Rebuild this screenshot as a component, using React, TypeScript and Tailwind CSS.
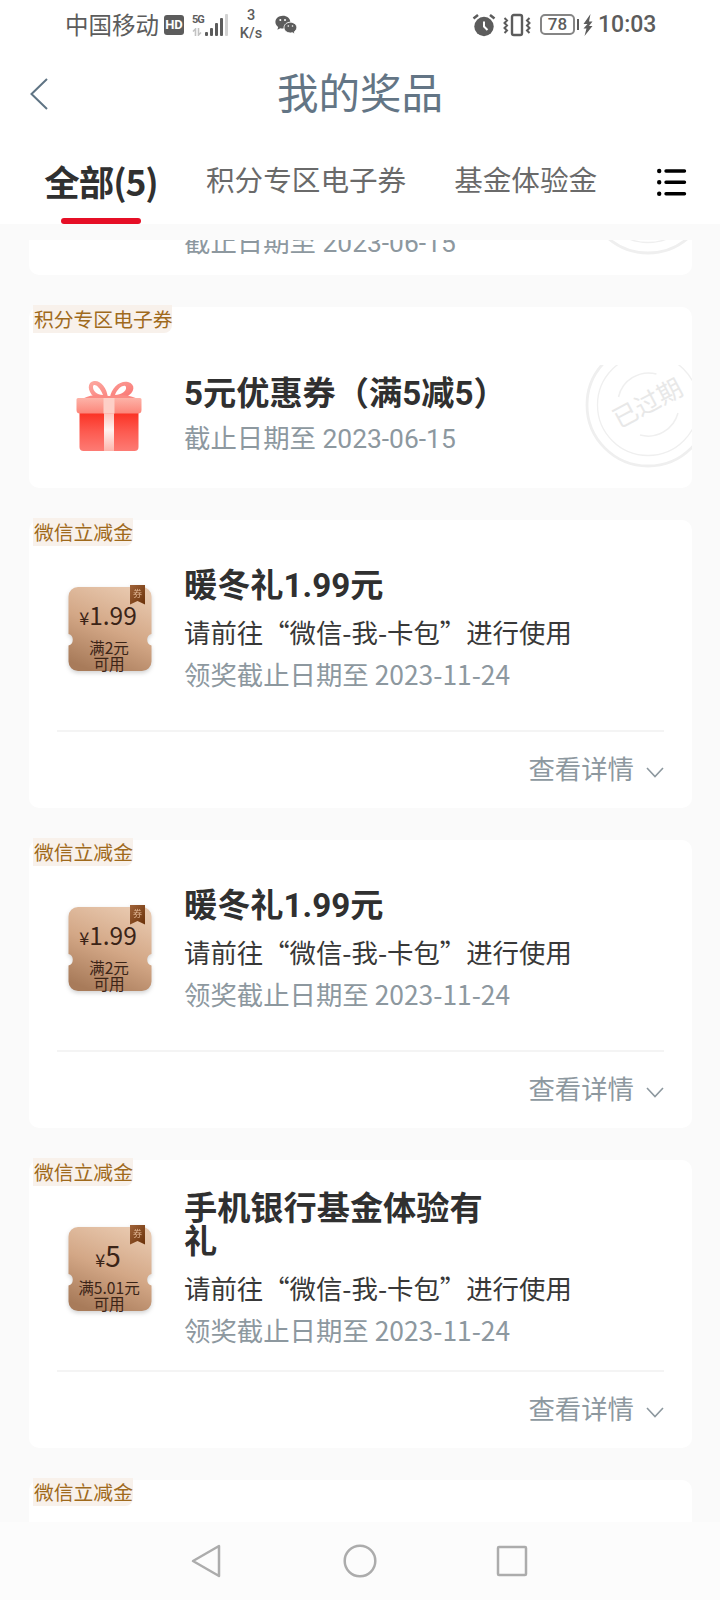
import clsx from "clsx";

type Prize = {
  id: number;
  kind: "coupon" | "wechat";
  tag: string;
  title: string;
  date: string;
  price?: string;
  limit?: string;
  scrolledOut?: boolean;
};

const prizes: Prize[] = [
  {
    id: 1,
    kind: "coupon",
    tag: "积分专区电子券",
    title: "5元优惠券（满5减5）",
    date: "截止日期至 2023-06-15",
    scrolledOut: true,
  },
  {
    id: 2,
    kind: "coupon",
    tag: "积分专区电子券",
    title: "5元优惠券（满5减5）",
    date: "截止日期至 2023-06-15",
  },
  {
    id: 3,
    kind: "wechat",
    tag: "微信立减金",
    title: "暖冬礼1.99元",
    date: "领奖截止日期至 2023-11-24",
    price: "1.99",
    limit: "满2元",
  },
  {
    id: 4,
    kind: "wechat",
    tag: "微信立减金",
    title: "暖冬礼1.99元",
    date: "领奖截止日期至 2023-11-24",
    price: "1.99",
    limit: "满2元",
  },
  {
    id: 5,
    kind: "wechat",
    tag: "微信立减金",
    title: "手机银行基金体验有礼",
    date: "领奖截止日期至 2023-11-24",
    price: "5",
    limit: "满5.01元",
  },
];

const StatusBar = () => (
  <div className="flex h-12 items-center pt-px pr-[65px] pl-[65px] text-[#5c5c5c]">
    <span className="w-[99px] text-[23.5px] leading-none whitespace-nowrap">
      中国移动
    </span>
    <span className="flex h-5 w-5 items-center justify-center rounded-[3px] bg-[#5c5c5c] font-['Roboto',sans-serif] text-[13px] font-bold text-white">
      HD
    </span>
    <div className="ml-2 flex h-6 w-9 gap-px">
      <div className="flex w-3 flex-col">
        <span className="font-['Roboto',sans-serif] text-[11px] leading-[13px] font-bold tracking-[-1px]">
          5G
        </span>
        <svg
          viewBox="0 0 10 8"
          className="mt-0.5 h-2 w-2.5"
          fill="none"
          stroke="#c2c2c2"
          strokeWidth="1.6"
        >
          <path d="M1 3.5 3.5 1v7M9 4.5 6.5 7V0" />
        </svg>
      </div>
      <svg viewBox="0 0 23 24" className="h-6 w-[23px]">
        <rect x="0" y="19" width="3" height="4" rx="1" fill="#5c5c5c" />
        <rect x="5" y="15" width="3" height="8" rx="1" fill="#5c5c5c" />
        <rect x="10" y="10" width="3" height="13" rx="1" fill="#5c5c5c" />
        <rect x="15" y="5" width="3" height="18" rx="1" fill="#5c5c5c" />
        <rect x="20" y="1" width="3" height="22" rx="1" fill="#d2d2d2" />
      </svg>
    </div>
    <div className="ml-2.5 flex w-[26px] flex-col items-center font-['Roboto',sans-serif] text-[14.5px] leading-[18px] font-medium">
      <span>3</span>
      <span>K/s</span>
    </div>
    <svg viewBox="0 0 22 20" className="ml-[11px] h-5 w-[22px]">
      <path
        d="M7.8.8C3.6.8.4 3.6.4 7.1c0 2 1.1 3.7 2.8 4.9l-.8 2.7 3-1.5c.8.2 1.6.3 2.4.3 4.2 0 7.5-2.8 7.5-6.4S12 .8 7.8.8z"
        fill="#5c5c5c"
      />
      <path
        d="M15.4 7.2c-3.6 0-6.4 2.4-6.4 5.4S11.8 18 15.4 18c.7 0 1.4-.1 2-.3l2.5 1.4-.6-2.3c1.5-1 2.5-2.5 2.5-4.2 0-3-2.9-5.4-6.4-5.4z"
        fill="#5c5c5c"
        stroke="#fff"
        strokeWidth=".9"
      />
      <g fill="#fff">
        <circle cx="5.3" cy="5" r="1" />
        <circle cx="10" cy="5" r="1" />
        <circle cx="13.3" cy="11" r=".8" />
        <circle cx="17.5" cy="11" r=".8" />
      </g>
    </svg>
    <svg viewBox="0 0 24 24" className="ml-auto h-6 w-6">
      <circle cx="12" cy="13.5" r="9.7" fill="#5c5c5c" />
      <path
        d="M1.5 5.5 6 2M22.5 5.5 18 2"
        stroke="#5c5c5c"
        strokeWidth="2.6"
      />
      <path d="M12 8.5v5l3.5 3.5" fill="none" stroke="#fff" strokeWidth="2" />
    </svg>
    <svg
      viewBox="0 0 28 24"
      className="ml-[7px] h-6 w-7"
      fill="none"
      stroke="#5c5c5c"
    >
      <rect x="9" y="2" width="10" height="20" rx="1.8" strokeWidth="2.4" />
      <path
        d="M1.500 5l2.500 2.500L1.500 10l2.500 2.500L1.500 15l2.500 2.500L1.500 20M26.500 5l-2.500 2.500L26.500 10l-2.500 2.500L26.500 15l-2.500 2.500L26.500 20"
        strokeWidth="2"
      />
    </svg>
    <span className="ml-[9px] flex h-[21px] w-[35px] items-center justify-center rounded-[5px] border-2 border-[#858585] font-['Roboto',sans-serif] text-[17px] leading-none font-medium">
      78
    </span>
    <span className="ml-[2px] h-[11px] w-[2px] bg-[#5c5c5c]" />
    <svg viewBox="0 0 10 22" className="ml-1 h-[22px] w-2.5" fill="#5c5c5c">
      <path d="M7.5 0 .5 10h4L.5 14.5h3L1.5 22 9.5 12H6l3.5-4.5H6z" />
    </svg>
    <span className="ml-[5px] w-[57px] font-['Roboto',sans-serif] text-[23px] leading-none font-medium">
      10:03
    </span>
  </div>
);

const Header = () => (
  <header className="flex h-[90px] items-center">
    <svg
      viewBox="0 0 18 32"
      className="mt-px ml-[30px] h-8 w-[18px]"
      fill="none"
      stroke="#5f7484"
      strokeWidth="2"
    >
      <path d="M17 1 1.5 16 17 31" />
    </svg>
    <h1 className="-mt-1 mr-12 flex-1 text-center text-[41.5px] leading-[60px] text-[#637585]">
      我的奖品
    </h1>
  </header>
);

const Tabs = () => (
  <nav className="flex h-[86px] items-start pt-[19px]">
    <div className="ml-[43px] flex w-[116px] flex-col items-center">
      <span className="text-[35.5px] leading-[48px] font-bold tracking-[-1.1px] whitespace-nowrap text-[#303030]">
        全部(5)
      </span>
      <span className="mt-[13px] h-[6px] w-20 rounded-full bg-[#e60f26]" />
    </div>
    <span className="ml-[47px] text-[28.6px] leading-[44px] whitespace-nowrap text-[#6a6a6a]">
      积分专区电子券
    </span>
    <span className="ml-[48px] text-[28.6px] leading-[44px] whitespace-nowrap text-[#6a6a6a]">
      基金体验金
    </span>
    <svg
      viewBox="0 0 30 28"
      className="mt-[11px] mr-[33px] ml-auto h-7 w-[30px]"
      stroke="#000"
      strokeWidth="3.4"
      strokeLinecap="round"
    >
      <path d="M9 3h18.5M9 14.3h18.5M9 25.7h18.5" />
      <path d="M2.2 3h.01M2.2 14.3h.01M2.2 25.7h.01" strokeWidth="4.4" />
    </svg>
  </nav>
);

const GiftIcon = () => (
  <svg viewBox="0 0 66 72" className="h-[72px] w-[66px]">
    <defs>
      <linearGradient id="giftBox" x1="0" y1="0" x2="0" y2="1">
        <stop offset="0" stopColor="#fb3022" />
        <stop offset=".5" stopColor="#fd5a50" />
        <stop offset="1" stopColor="#fd7b74" />
      </linearGradient>
      <linearGradient id="giftLid" x1="0" y1="0" x2="0" y2="1">
        <stop offset="0" stopColor="#fdb3a8" />
        <stop offset="1" stopColor="#fc8579" />
      </linearGradient>
      <linearGradient id="giftBow" x1="0" y1="0" x2="1" y2="1">
        <stop offset="0" stopColor="#fdaaa2" />
        <stop offset="1" stopColor="#f97471" />
      </linearGradient>
      <linearGradient id="giftRibbon" x1="0" y1="0" x2="0" y2="1">
        <stop offset="0" stopColor="#fdc0b8" />
        <stop offset=".45" stopColor="#fff3f0" />
        <stop offset="1" stopColor="#fdb5ac" />
      </linearGradient>
    </defs>
    {/* bow: two loops, then the loose ends */}
    <path
      fillRule="evenodd"
      fill="url(#giftBow)"
      d="M32 18C31 7 24 0 18 1 11 2 11 11 18 17zM27 15c-6 0-10-4-10-8 0-4 6-2 10 8zM34 18C35 7 45 0 52 2c8 2 7 11-2 15zM39 15C42 7 49 4 50 7c1 4-5 8-11 8z"
    />
    <path d="M7 18.5C15 14 25 14.500 33 16c8-1.500 19-2 28 2.500z" fill="#fb8a83" />
    <path
      d="M3.5 32h59v35a4 4 0 0 1-4 4h-51a4 4 0 0 1-4-4z"
      fill="url(#giftBox)"
    />
    <path d="M28 32h10v39H28z" fill="url(#giftRibbon)" />
    <path
      d="M2 18h62a1.500 1.500 0 0 1 1.500 1.500V30a3.500 3.500 0 0 1-3.500 3.500H4A3.500 3.500 0 0 1 .5 30V19.500A1.500 1.500 0 0 1 2 18z"
      fill="url(#giftLid)"
    />
    <path d="M27.500 18h11v15.500h-11z" fill="#fdcfc7" />
  </svg>
);

const TicketIcon = ({ price, limit }: { price?: string; limit?: string }) => (
  <div className="relative flex h-[90px] w-[84px] flex-col items-center text-[#3b2417]">
    <svg
      viewBox="0 0 84 90"
      className="absolute inset-0 h-[90px] w-[84px] overflow-visible drop-shadow-[0_2px_2px_rgba(0,0,0,0.18)]"
    >
      <defs>
        <linearGradient id="ticket" x1=".7" y1="0" x2=".3" y2="1">
          <stop offset="0" stopColor="#e8c8ae" />
          <stop offset=".5" stopColor="#d3a786" />
          <stop offset="1" stopColor="#a87b5a" />
        </linearGradient>
        <linearGradient id="flag" x1="0" y1="0" x2="1" y2="1">
          <stop offset="0" stopColor="#a0643a" />
          <stop offset="1" stopColor="#6a3008" />
        </linearGradient>
      </defs>
      <path
        d="M10 2h64a9.5 9.5 0 0 1 9.5 9.5V49a6 6 0 0 0 0 11.500v16A9.5 9.5 0 0 1 74 86H10A9.5 9.5 0 0 1 .5 76.500V60.500a6 6 0 0 0 0-11.500V11.500A9.5 9.5 0 0 1 10 2z"
        fill="url(#ticket)"
      />
      <path d="M62 0h15v19.500L69.500 16 62 19.500z" fill="url(#flag)" />
      <text x="69.5" y="12" fontSize="9" textAnchor="middle" fill="#dfb491">
        券
      </text>
    </svg>
    <div className="relative mt-[12px] mr-1 flex h-9 items-baseline leading-9">
      <span className="text-[18px]">¥</span>
      <span className={clsx(price === "5" ? "text-[28px]" : "text-[24.5px]")}>
        {price}
      </span>
    </div>
    <div className="relative mt-[6px] mr-0.5 text-center text-[15.6px] leading-4 whitespace-nowrap">
      {limit}
      <br />
      可用
    </div>
  </div>
);

const ExpiredStamp = () => (
  <svg
    viewBox="585 365 107 104"
    className="absolute top-[58px] right-0 h-[104px] w-[107px]"
    fill="none"
    stroke="#efefef"
  >
    <circle cx="648" cy="405" r="61" strokeWidth="2.8" />
    <circle cx="648" cy="405" r="50.5" strokeWidth="1.3" />
    <path
      d="M618.5 397a31 31 0 0 1 38-23M640 435a31 31 0 0 0 38-22"
      strokeWidth="1.5"
    />
    <text
      x="648"
      y="412"
      fontSize="25"
      textAnchor="middle"
      fill="#e8e8e8"
      stroke="none"
      transform="rotate(-28 648 404)"
    >
      已过期
    </text>
  </svg>
);

const Tag = ({ text, hidden }: { text: string; hidden?: boolean }) => (
  <span
    className={clsx(
      "-mt-[2px] ml-1 flex h-7 w-fit shrink-0 items-center rounded-br-lg bg-[#f8f1eb] pl-px text-[19.8px] leading-none text-[#a06a1c]",
      hidden && "invisible"
    )}
  >
    {text}
  </span>
);

const PrizeCard = ({ prize }: { prize: Prize }) => {
  const isWechat = prize.kind === "wechat";

  return (
    <li
      className={clsx(
        "relative flex shrink-0 flex-col rounded-[10px] bg-white",
        isWechat ? "h-72" : "h-[181px]"
      )}
    >
      <Tag text={prize.tag} hidden={prize.scrolledOut} />

      <div
        className={clsx(
          "flex shrink-0 items-center pl-[39px]",
          isWechat ? "h-[173px] pb-0.5" : "h-[155px] pt-4"
        )}
      >
        <div className="flex w-[116px] shrink-0">
          {isWechat ? (
            <div className="-mt-1">
              <TicketIcon price={prize.price} limit={prize.limit} />
            </div>
          ) : (
            <div className="-mt-1.5 ml-2">
              <GiftIcon />
            </div>
          )}
        </div>
        <div className={clsx(prize.scrolledOut && "relative top-[17px]")}>
          <h2
            className={clsx(
              "w-[320px] font-['Roboto','Noto_Sans_CJK_SC',sans-serif] text-[33.2px] leading-[33px] font-bold text-[#303030]",
              prize.scrolledOut && "invisible"
            )}
          >
            {prize.title}
          </h2>
          {isWechat && (
            <p className="mt-[9px] text-[26.4px] leading-[42px] text-[#383838]">
              请前往“微信-我-卡包”进行使用
            </p>
          )}
          <p
            className={clsx(
              "text-[26.4px] leading-[42px] text-[#8d989f]",
              !isWechat && "mt-2 font-['Roboto','Noto_Sans_CJK_SC',sans-serif]"
            )}
          >
            {prize.date}
          </p>
        </div>
      </div>

      {isWechat ? (
        <div className="mx-7 mt-[11px] flex h-[76px] items-center justify-end border-t-2 border-[#f4f4f4] pb-[3px] text-[26.4px] text-[#8d989f]">
          查看详情
          <svg
            viewBox="0 0 18 11"
            className="mt-[9px] ml-3 h-[11px] w-[18px]"
            fill="none"
            stroke="#8d989f"
            strokeWidth="1.6"
          >
            <path d="M1 1l8 8.5L17 1" />
          </svg>
        </div>
      ) : (
        <ExpiredStamp />
      )}
    </li>
  );
};

const NavigationBar = () => (
  <footer className="flex h-[78px] items-center justify-center gap-[118px] bg-[#fcfcfc]">
    <svg
      viewBox="0 0 34 34"
      className="h-[34px] w-[34px]"
      fill="none"
      stroke="#acacac"
      strokeWidth="2.5"
      strokeLinejoin="round"
    >
      <path d="M2 17 28 2v30z" />
    </svg>
    <svg
      viewBox="0 0 34 34"
      className="h-[34px] w-[34px]"
      fill="none"
      stroke="#acacac"
      strokeWidth="2.5"
    >
      <circle cx="17" cy="17" r="15.3" />
    </svg>
    <svg
      viewBox="0 0 34 34"
      className="h-[34px] w-[34px]"
      fill="none"
      stroke="#acacac"
      strokeWidth="2.5"
    >
      <rect x="3" y="3" width="28" height="28" rx="1" />
    </svg>
  </footer>
);

const App = () => {
  return (
    <div
      lang="zh-CN"
      className="flex h-[1600px] w-[720px] flex-col overflow-hidden bg-[#fafafa] font-['Noto_Sans_CJK_SC',sans-serif]"
    >
      <div className="h-56 shrink-0 bg-white">
        <StatusBar />
        <Header />
        <Tabs />
      </div>

      <main className="mt-4 h-[1282px] shrink-0 overflow-hidden">
        <ul className="-mt-[146px] ml-[29px] flex w-[663px] flex-col gap-8">
          {prizes.map((prize) => (
            <PrizeCard key={prize.id} prize={prize} />
          ))}
          <li className="flex h-72 shrink-0 flex-col rounded-[10px] bg-white">
            <Tag text="微信立减金" />
          </li>
        </ul>
      </main>

      <NavigationBar />
    </div>
  );
};

export default App;
